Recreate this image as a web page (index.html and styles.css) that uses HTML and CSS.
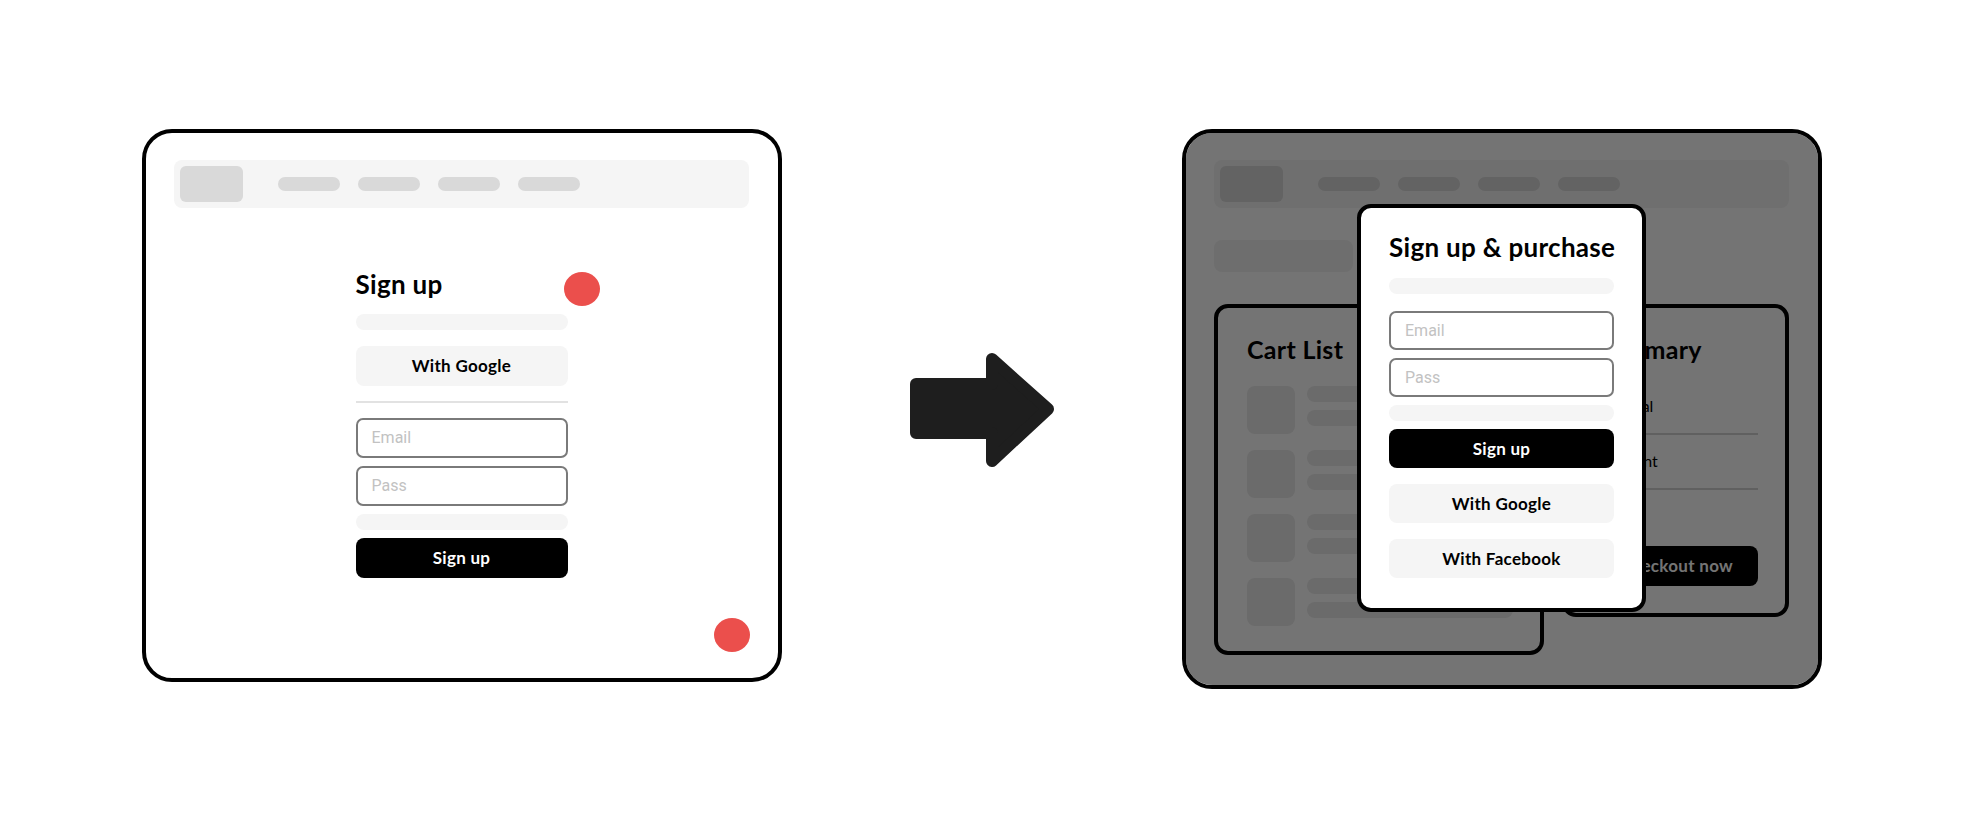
FILE: index.html
```html
<!DOCTYPE html>
<html lang="en">
<head>
<meta charset="utf-8">
<title>Sign up flow</title>
<link rel="stylesheet" href="styles.css">
</head>
<body>
<div class="stage">
  <div class="frame frame-left">
    <div class="navbar">
      <div class="logo"></div>
      <div class="pills"><span class="pill"></span><span class="pill"></span><span class="pill"></span><span class="pill"></span></div>
    </div>
    <div class="form">
      <div class="title">Sign up</div>
      <div class="bar bar-sub"></div>
      <div class="btn btn-light btn-google">With Google</div>
      <div class="divider"></div>
      <div class="input">Email</div>
      <div class="input input-next">Pass</div>
      <div class="bar bar-next"></div>
      <div class="btn btn-dark btn-next">Sign up</div>
    </div>
    <span class="dot dot-title"></span>
    <span class="dot dot-corner"></span>
  </div>

  <svg class="arrow" width="144" height="114" viewBox="0 0 144 114" aria-hidden="true">
    <polygon points="6,31 82,31 82,6 138,56 82,108 82,80 6,80" fill="#1e1e1e" stroke="#1e1e1e" stroke-width="12" stroke-linejoin="round"/>
  </svg>

  <div class="frame frame-right">
    <div class="navbar">
      <div class="logo"></div>
      <div class="pills"><span class="pill"></span><span class="pill"></span><span class="pill"></span><span class="pill"></span></div>
    </div>
    <div class="crumb"></div>
    <div class="cards">
      <div class="card cart">
        <div class="card-title">Cart List</div>
        <div class="items">
          <div class="item"><div class="thumb"></div><div class="lines"><span class="line"></span><span class="line"></span></div></div>
          <div class="item"><div class="thumb"></div><div class="lines"><span class="line"></span><span class="line"></span></div></div>
          <div class="item"><div class="thumb"></div><div class="lines"><span class="line"></span><span class="line"></span></div></div>
          <div class="item"><div class="thumb"></div><div class="lines"><span class="line"></span><span class="line"></span></div></div>
        </div>
      </div>
      <div class="card summary">
        <div class="card-title">Summary</div>
        <div class="sum-row sum-first">Subtotal</div>
        <div class="sum-row">Discount</div>
        <div class="btn btn-dark checkout">Checkout now</div>
      </div>
    </div>
    <div class="dim"></div>
    <div class="modal">
      <div class="title">Sign up &amp; purchase</div>
      <div class="bar m-bar"></div>
      <div class="input m-input m-first">Email</div>
      <div class="input m-input m-next">Pass</div>
      <div class="bar m-next"></div>
      <div class="btn btn-dark m-btn m-next">Sign up</div>
      <div class="btn btn-light m-btn m-gap">With Google</div>
      <div class="btn btn-light m-btn m-gap">With Facebook</div>
    </div>
  </div>
</div>
</body>
</html>
```

FILE: styles.css
```css
* { box-sizing: border-box; }

body {
  margin: 0;
  background: #fff;
  font-family: Lato, "Noto Sans", sans-serif;
  color: #000;
}

.stage {
  width: 1964px;
  height: 820px;
  display: flex;
  align-items: flex-start;
  gap: 128px;
  padding: 129px 0 0 142px;
}

.frame {
  position: relative;
  width: 640px;
  border: 4px solid #000;
  border-radius: 30px;
  padding: 27px 29px 0 28px;
  background: #fff;
  overflow: hidden;
}
.frame-left { height: 553px; }
.frame-right { height: 560px; }

.navbar {
  display: flex;
  align-items: center;
  height: 48px;
  padding: 0 6px;
  background: #f5f5f5;
  border-radius: 8px;
}
.logo {
  width: 63px;
  height: 36px;
  border-radius: 6px;
  background: #d9d9d9;
}
.pills {
  display: flex;
  gap: 18px;
  margin-left: 35px;
}
.pill {
  width: 62px;
  height: 14px;
  border-radius: 7px;
  background: #d9d9d9;
}

/* form on the left */
.form {
  width: 212px;
  margin: 64px auto 0;
  display: flex;
  flex-direction: column;
}
.title {
  font-size: 26px;
  font-weight: 700;
  line-height: 24px;
  letter-spacing: 0.3px;
  white-space: nowrap;
}
.bar {
  height: 16px;
  border-radius: 8px;
  background: #f5f5f5;
}
.bar-sub { margin-top: 18px; }
.btn {
  height: 40px;
  line-height: 40px;
  border-radius: 8px;
  text-align: center;
  font-size: 17px;
  font-weight: 700;
  letter-spacing: 0.3px;
}
.btn-light { background: #f5f5f5; color: #000; }
.btn-dark { background: #000; color: #fff; }
.btn-google { margin-top: 16px; }
.divider {
  height: 2px;
  margin: 15px 0 15px;
  background: #e2e2e2;
}
.input {
  height: 40px;
  border: 2px solid #7a7a7a;
  border-radius: 7px;
  padding-left: 14px;
  line-height: 36px;
  font-family: Roboto, "Liberation Sans", sans-serif;
  font-size: 16px;
  color: #c2c2c2;
}
.input-next, .bar-next, .btn-next { margin-top: 8px; }

.dot {
  position: absolute;
  width: 36px;
  height: 34px;
  border-radius: 50%;
  background: #eb4f4c;
}
.dot-title { left: 418px; top: 139px; }
.dot-corner { left: 568px; top: 485px; }

.arrow {
  margin-top: 224px;
  flex: none;
}

/* page behind the modal */
.crumb {
  width: 139px;
  height: 32px;
  margin-top: 32px;
  border-radius: 8px;
  background: #f2f2f2;
}
.cards {
  display: flex;
  align-items: flex-start;
  gap: 18px;
  margin-top: 32px;
}
.card {
  border: 4px solid #000;
  border-radius: 14px;
  background: #fff;
}
.cart {
  width: 330px;
  padding: 29px 27px 25px 29px;
}
.summary {
  width: 227px;
  padding: 29px 27px 27px 29px;
}
.card-title {
  font-size: 25px;
  font-weight: 700;
  line-height: 24px;
  letter-spacing: 0.3px;
}
.items {
  display: flex;
  flex-direction: column;
  gap: 16px;
  margin-top: 25px;
}
.item {
  display: flex;
  gap: 12px;
}
.thumb {
  width: 48px;
  height: 48px;
  border-radius: 8px;
  background: #ebebeb;
  flex: none;
}
.lines {
  flex: 1;
  display: flex;
  flex-direction: column;
  gap: 8px;
}
.line {
  height: 16px;
  border-radius: 8px;
  background: #ebebeb;
}
.sum-row {
  font-size: 16px;
  line-height: 20px;
  padding-bottom: 17px;
  border-bottom: 2px solid #d4d4d4;
  margin-top: 16px;
}
.sum-first { margin-top: 35px; }
.checkout { margin-top: 56px; }

.dim {
  position: absolute;
  inset: 0;
  background: rgba(0, 0, 0, 0.545);
}

.modal {
  position: absolute;
  left: 171px;
  top: 71px;
  width: 289px;
  border: 4px solid #000;
  border-radius: 14px;
  background: #fff;
  padding: 27px 28px 30px;
  display: flex;
  flex-direction: column;
}
.m-bar { margin-top: 19px; }
.m-input, .m-btn { height: 39px; }
.m-input { line-height: 35px; }
.m-btn { line-height: 39px; }
.m-first { margin-top: 17px; }
.m-next { margin-top: 8px; }
.m-gap { margin-top: 16px; }
```
